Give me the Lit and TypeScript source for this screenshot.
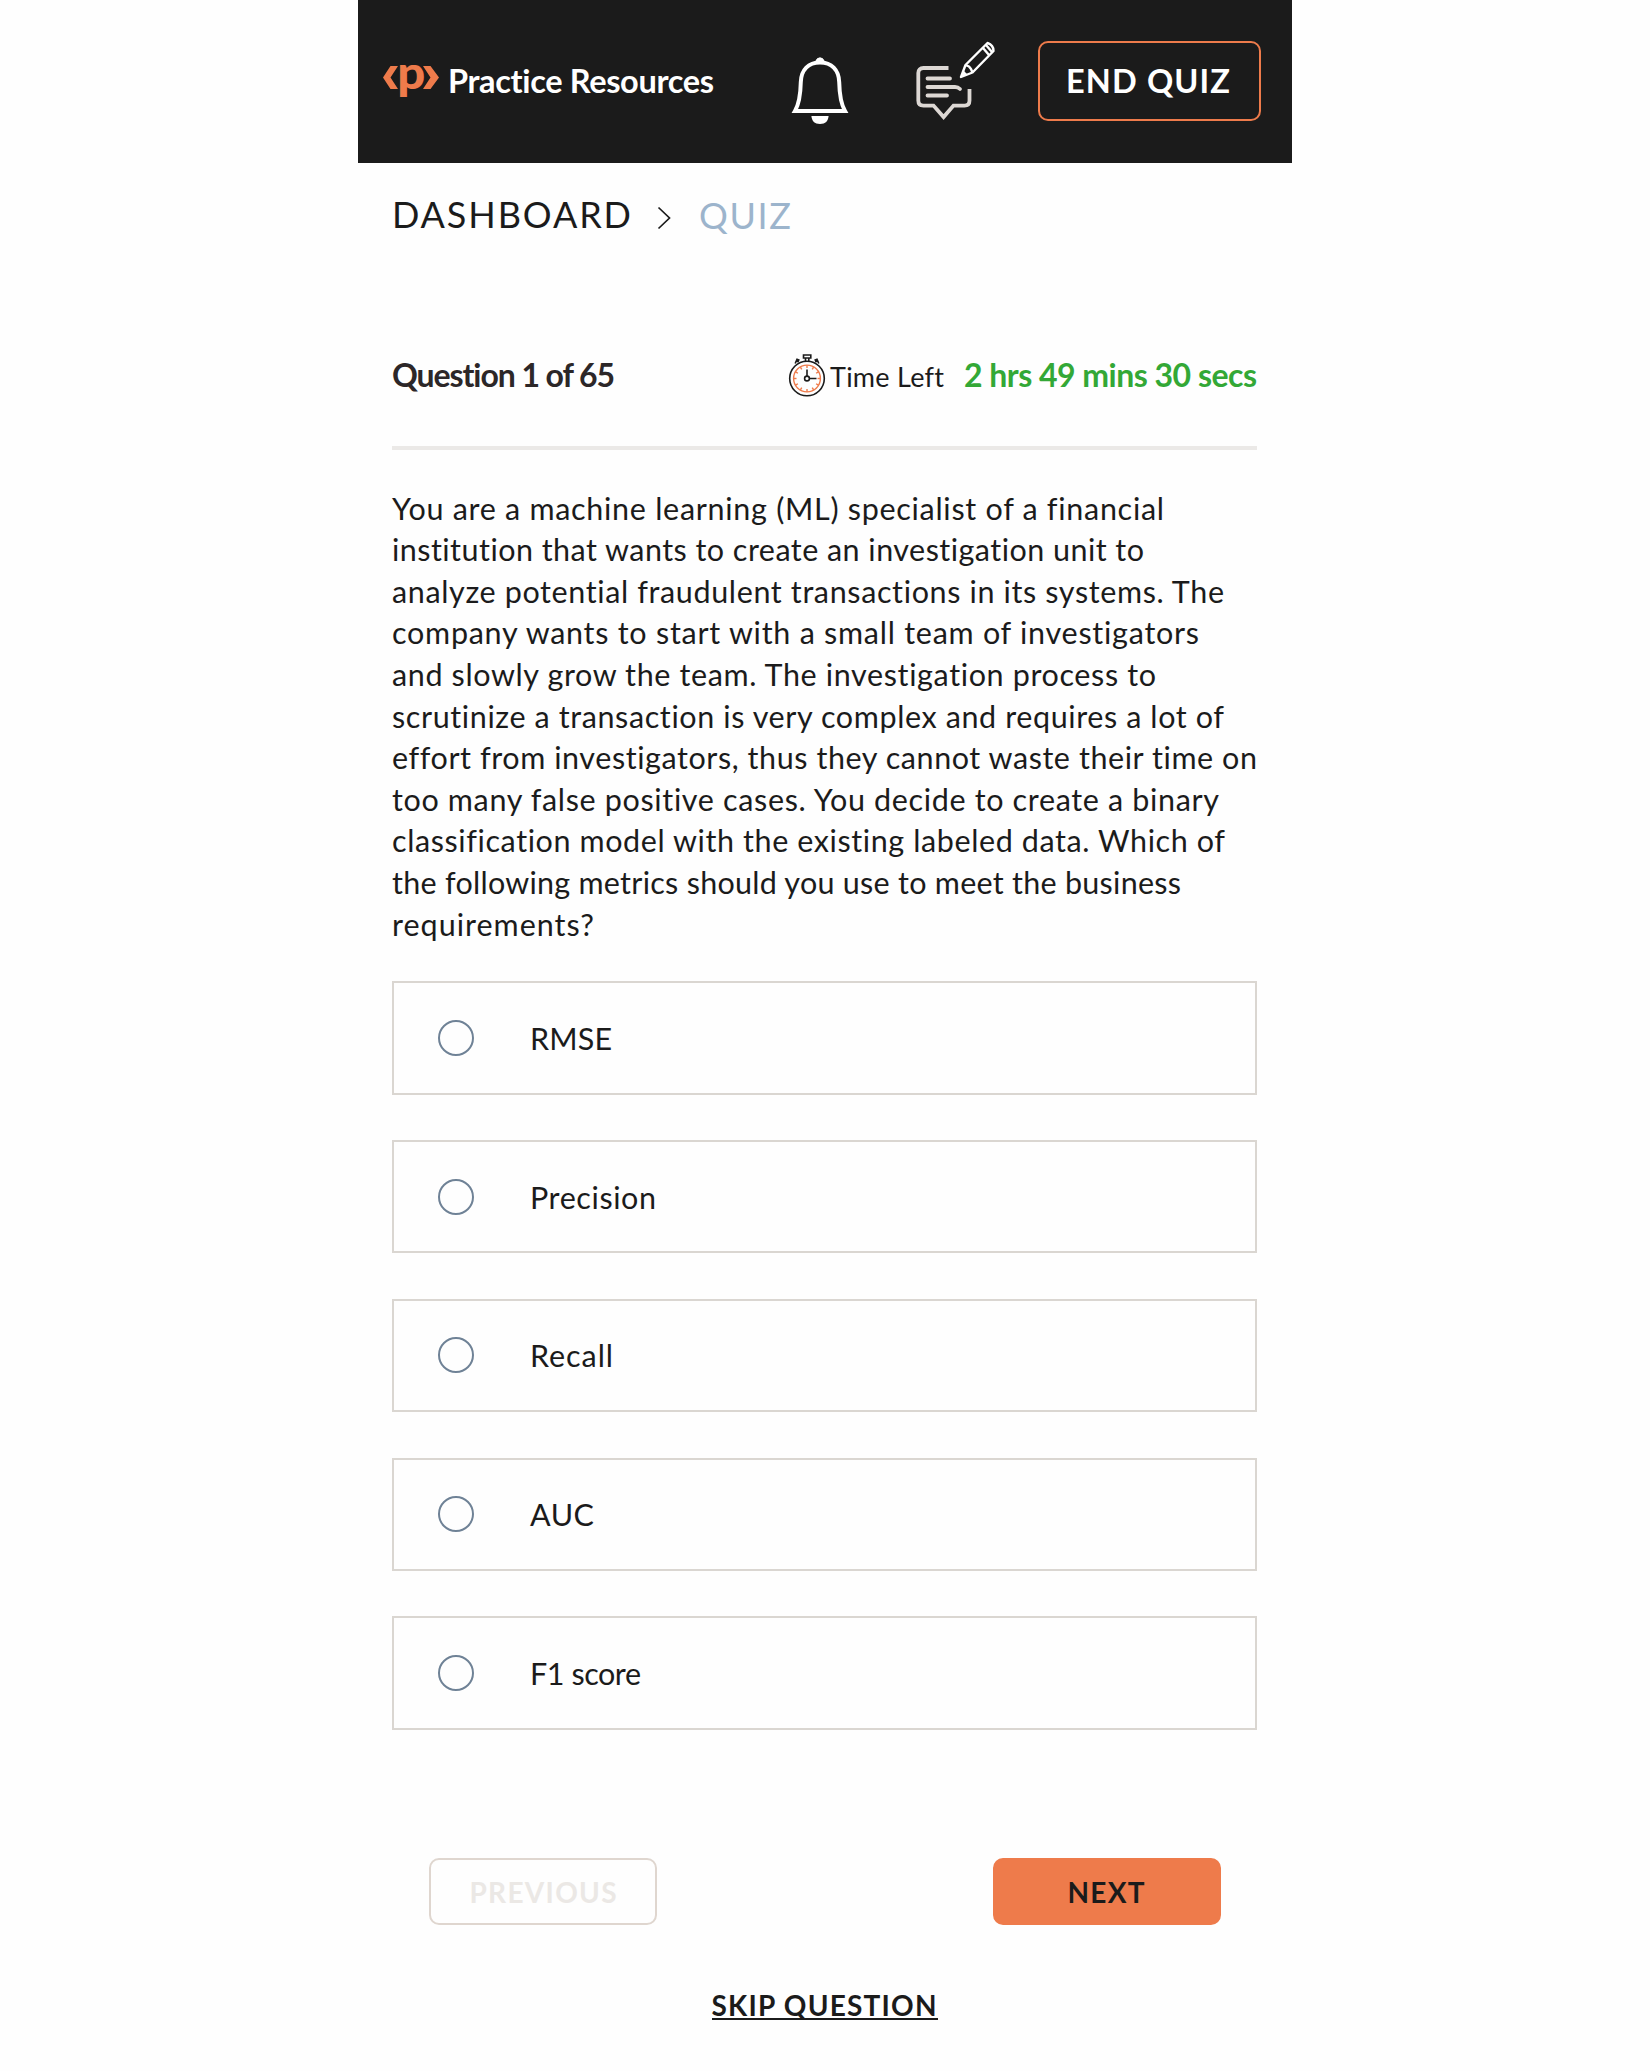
import { LitElement, html, svg, css } from "lit";
import { customElement, property, state, query } from "lit/decorators.js";

/** A single line of text, tracked so that it fills the given width. */
@customElement("fit-text")
export class FitText extends LitElement {
  static styles = css`
    :host {
      display: block;
      white-space: nowrap;
      font-variant-ligatures: none;
    }
    .line {
      display: inline-block;
    }
  `;

  @property() text = "";
  @property({ type: Number }) width = 0;
  @query(".line") private line!: HTMLElement;

  render() {
    return html`<span class="line">${this.text}</span>`;
  }

  updated() {
    this.style.width = `${this.width}px`;
    this.line.style.letterSpacing = "0";
    const natural = this.line.getBoundingClientRect().width;
    const gaps = Math.max(1, this.text.length - 1);
    this.line.style.letterSpacing = `${(this.width - natural) / gaps}px`;
  }
}

const logo = html`<svg class="logo" width="58" height="36" viewBox="0 0 58 36">
  <path d="M8.5 2H16L8.5 13.5L16 25H8.5L1 13.5Z" fill="#ee7b4b" />
  <path d="M41 2H48.5L57 13.5L48.5 25H41L48.5 13.5Z" fill="#ee7b4b" />
  <text class="logo-letter" x="15.2" y="25" textLength="28" lengthAdjust="spacingAndGlyphs">p</text>
</svg>`;

const bell = html`<svg class="bell" width="60" height="70" viewBox="0 0 60 70">
  <path
    d="M5 56C9 49 10.5 41 10.8 27C11.2 14.5 18.5 7.5 30 7.5S48.8 14.5 49.2 27C49.5 41 51 49 55 56Z"
    fill="none" stroke="#fff" stroke-width="4" />
  <path d="M26 6a4.2 4.5 0 0 1 8 0z" fill="#fff" stroke="#fff" />
  <path d="M21.4 61H38.6C38.2 66 35.5 69 30 69S21.8 66 21.4 61Z" fill="#fff" />
</svg>`;

const note = html`<svg class="note" width="80" height="80" viewBox="0 0 80 80">
  <g fill="none" stroke="#ddd8d4" stroke-width="3.8">
    <path d="M33.5 27H8.5Q3.3 27 3.3 32V59.5Q3.3 64.6 8.5 64.6H18.5L28.6 76L38.5 64.6H49.5Q54.5 64.6 54.5 59.5V48" />
    <path d="M12.5 37.5H35M12.5 46H40Q43 46 45 48M12.5 54.5H32" stroke-linecap="round" />
  </g>
  <g fill="none" stroke="#fff" stroke-width="2.4" stroke-linejoin="round">
    <path d="M46 36L50.5 24L72.5 2Q78.5 4 78.5 10L57.5 31.5Z" />
    <path d="M50.5 24L54 25.5L56 28L57.5 31.5M68 7L74 14M71 4L77 11" />
    <path d="M46 36L48.5 29.5L52.5 33.5Z" fill="#fff" stroke="none" />
  </g>
</svg>`;

const ticks = Array.from(
  { length: 12 },
  (_, i) => svg`<path d="M19 11.3V14" transform="rotate(${i * 30} 19 24.5)" />`
);

const stopwatch = html`<svg class="stopwatch" width="38" height="43" viewBox="0 0 38 43">
  <g fill="none" stroke="#1b1b1b" stroke-width="1.6">
    <circle cx="19" cy="24.5" r="17.3" />
    <path d="M15.5 1H22.8V4H15.5ZM17.5 4V7M20.8 4V7" />
    <path d="M7.2 9.5L9 5.2L11.5 6.3M10.5 8.3L9.2 5.5M30.8 9.5L29 5.2L26.5 6.3M27.5 8.3L28.8 5.5" />
    <circle cx="19" cy="24.5" r="2.4" />
    <path d="M19 22V15.5M21.5 24.5H28.5" />
  </g>
  <g fill="none" stroke="#ee7b4b" stroke-width="1.4">
    <circle cx="19" cy="24.5" r="13.4" />
    ${ticks}
  </g>
</svg>`;

interface Line {
  text: string;
  width: number;
}

const question: Line[] = [
  { text: "You are a machine learning (ML) specialist of a financial", width: 772 },
  { text: "institution that wants to create an investigation unit to", width: 752 },
  { text: "analyze potential fraudulent transactions in its systems. The", width: 832 },
  { text: "company wants to start with a small team of investigators", width: 807 },
  { text: "and slowly grow the team. The investigation process to", width: 764 },
  { text: "scrutinize a transaction is very complex and requires a lot of", width: 832 },
  { text: "effort from investigators, thus they cannot waste their time on", width: 865 },
  { text: "too many false positive cases. You decide to create a binary", width: 827 },
  { text: "classification model with the existing labeled data. Which of", width: 833 },
  { text: "the following metrics should you use to meet the business", width: 789 },
  { text: "requirements?", width: 202 },
];

const options: Line[] = [
  { text: "RMSE", width: 82 },
  { text: "Precision", width: 126 },
  { text: "Recall", width: 83 },
  { text: "AUC", width: 64 },
  { text: "F1 score", width: 111 },
];

@customElement("app-root")
export class AppRoot extends LitElement {
  static styles = css`
    :host {
      display: block;
      min-height: 2071px;
      background: #fefefe;
      color: #1b1b1b;
      font-family: Lato, "Open Sans", sans-serif;
    }
    .page {
      width: 934px;
      margin: 0 auto;
    }
    .bar {
      display: flex;
      align-items: flex-start;
      height: 163px;
      box-sizing: border-box;
      padding: 41px 31px 0 24px;
      background: #1b1b1b;
      color: #fff;
    }
    .logo {
      flex: none;
      margin-top: 23px;
      overflow: visible;
    }
    .logo-letter {
      font-family: Lato, sans-serif;
      font-weight: 900;
      font-size: 45px;
      fill: #ee7b4b;
    }
    .brand {
      margin: 18px 0 0 8px;
      font-size: 32.5px;
      font-weight: 700;
      line-height: 44px;
    }
    .bell {
      flex: none;
      margin: 14px 0 0 76px;
    }
    .note {
      flex: none;
      margin: 0 0 0 65px;
    }
    .button {
      display: flex;
      align-items: center;
      justify-content: center;
      box-sizing: border-box;
      padding: 0;
      border: 2px solid #ee7b4b;
      border-radius: 10px;
      background: none;
      color: inherit;
      font: 700 28px/34px Lato, sans-serif;
    }
    .end {
      width: 223px;
      height: 80px;
      margin-left: auto;
      padding-right: 3px;
      font-size: 32.5px;
    }
    .body {
      padding: 0 35px 0 34px;
    }
    .crumbs {
      display: flex;
      align-items: flex-start;
      height: 44px;
      margin-top: 28.5px;
      font-size: 36px;
      line-height: 44px;
    }
    .chevron {
      margin: 14px 28px 0 26px;
    }
    .current {
      margin-top: 1.5px;
      color: #9cb4cc;
    }
    .status {
      display: flex;
      align-items: center;
      height: 44px;
      margin-top: 117.5px;
      line-height: 44px;
      font-size: 32px;
      font-weight: 700;
    }
    .count {
      color: #2c2728;
    }
    .stopwatch {
      flex: none;
      margin-left: auto;
    }
    .label {
      margin: 4px 20px 0 4px;
      font-size: 27px;
      font-weight: 400;
    }
    .time {
      color: #33a836;
    }
    .rule {
      height: 4px;
      margin-top: 49px;
      background: #ebe9e7;
    }
    .question {
      margin: 37.6px 0 0;
      font-size: 30.5px;
      line-height: 41.6px;
    }
    .options {
      display: flex;
      flex-direction: column;
      gap: 45.3px;
      margin-top: 36px;
    }
    .option {
      display: flex;
      align-items: center;
      box-sizing: border-box;
      height: 113.5px;
      padding-left: 44px;
      border: 2px solid #dad6d1;
      font-size: 30.5px;
      line-height: 40px;
    }
    .radio {
      box-sizing: border-box;
      width: 36px;
      height: 36px;
      margin-right: 56px;
      border: 2px solid #6f8296;
      border-radius: 50%;
    }
    .picked {
      border-width: 10px;
    }
    .actions {
      display: flex;
      justify-content: space-between;
      margin: 128.5px 36px 0 37px;
    }
    .action {
      width: 228px;
      height: 67px;
    }
    .previous {
      border-color: #dfd6cf;
      color: #ebe8e5;
    }
    .next {
      padding-right: 2px;
      background: #ee7b4b;
    }
    .skip {
      width: 226px;
      margin: 67px auto 0;
      border-bottom: 2px solid #1b1b1b;
      font-size: 28px;
      font-weight: 700;
      line-height: 26px;
    }
  `;

  @state() private choice = -1;

  private renderOption(option: Line, index: number) {
    return html`<div class="option" @click=${() => (this.choice = index)}>
      <span class="radio ${this.choice === index ? "picked" : ""}"></span>
      <fit-text .text=${option.text} .width=${option.width}></fit-text>
    </div>`;
  }

  render() {
    return html`<main class="page">
      <header class="bar">
        ${logo}
        <fit-text class="brand" .text=${"Practice Resources"} .width=${266}></fit-text>
        ${bell} ${note}
        <button class="button end">
          <fit-text .text=${"END QUIZ"} .width=${164}></fit-text>
        </button>
      </header>
      <div class="body">
        <nav class="crumbs">
          <fit-text .text=${"DASHBOARD"} .width=${239}></fit-text>
          <svg class="chevron" width="14" height="24" viewBox="0 0 14 24">
            <path d="M1.5 1.5L12.5 12L1.5 22.5" fill="none" stroke="#1b1b1b" stroke-width="1.7" />
          </svg>
          <fit-text class="current" .text=${"QUIZ"} .width=${92}></fit-text>
        </nav>
        <section class="status">
          <fit-text class="count" .text=${"Question 1 of 65"} .width=${223}></fit-text>
          ${stopwatch}
          <fit-text class="label" .text=${"Time Left"} .width=${114}></fit-text>
          <fit-text class="time" .text=${"2 hrs 49 mins 30 secs"} .width=${293}></fit-text>
        </section>
        <div class="rule"></div>
        <section class="question">
          ${question.map((line) => html`<fit-text .text=${line.text} .width=${line.width}></fit-text>`)}
        </section>
        <section class="options">${options.map((option, i) => this.renderOption(option, i))}</section>
        <div class="actions">
          <button class="button action previous">
            <fit-text .text=${"PREVIOUS"} .width=${147}></fit-text>
          </button>
          <button class="button action next">
            <fit-text .text=${"NEXT"} .width=${77}></fit-text>
          </button>
        </div>
        <div class="skip"><fit-text .text=${"SKIP QUESTION"} .width=${225}></fit-text></div>
      </div>
    </main>`;
  }
}
